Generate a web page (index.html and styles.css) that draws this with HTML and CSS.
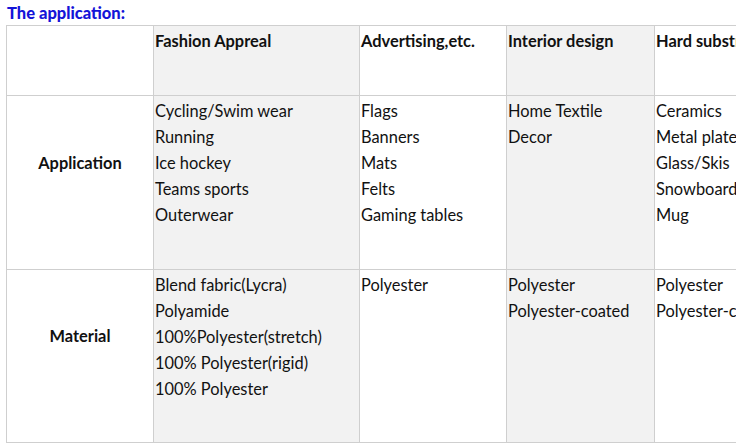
FILE: index.html
```html
<!DOCTYPE html>
<html>
<head>
<meta charset="utf-8">
<link rel="stylesheet" href="styles.css">
</head>
<body>
<div class="page">
  <h2 class="title">The application:</h2>
  <div class="clip">
    <table class="grid">
      <colgroup>
        <col class="c1"><col class="c2"><col class="c3"><col class="c4"><col class="c5">
      </colgroup>
      <tr class="head">
        <td></td>
        <td class="shade"><b>Fashion Appreal</b></td>
        <td><b>Advertising,etc.</b></td>
        <td class="shade"><b>Interior design</b></td>
        <td><b>Hard substrates</b></td>
      </tr>
      <tr class="row r1">
        <th>Application</th>
        <td class="shade"><div>Cycling/Swim wear</div><div>Running</div><div>Ice hockey</div><div>Teams sports</div><div>Outerwear</div></td>
        <td><div>Flags</div><div>Banners</div><div>Mats</div><div>Felts</div><div>Gaming tables</div></td>
        <td class="shade"><div>Home Textile</div><div>Decor</div></td>
        <td><div>Ceramics</div><div>Metal plates</div><div>Glass/Skis</div><div>Snowboards</div><div>Mug</div></td>
      </tr>
      <tr class="row r2">
        <th>Material</th>
        <td class="shade"><div>Blend fabric(Lycra)</div><div>Polyamide</div><div>100%Polyester(stretch)</div><div>100% Polyester(rigid)</div><div>100% Polyester</div></td>
        <td><div>Polyester</div></td>
        <td class="shade"><div>Polyester</div><div>Polyester-coated</div></td>
        <td><div>Polyester</div><div>Polyester-coated</div></td>
      </tr>
    </table>
  </div>
</div>
</body>
</html>
```
FILE: styles.css
```css
html, body {
  margin: 0;
  padding: 0;
  background: #fff;
}
.page {
  padding: 3px 0 0 6px;
  font-family: Lato, "Liberation Sans", sans-serif;
  color: #111;
}
.title {
  margin: 0 0 0 1px;
  height: 22px;
  font-size: 16.5px;
  line-height: 20px;
  font-weight: 900;
  color: #1414d8;
}
.clip {
  width: 730px;
  overflow: hidden;
}
.grid {
  border-collapse: collapse;
  table-layout: fixed;
  width: 880px;
  font-size: 16.4px;
}
.c1 { width: 147px; }
.c2 { width: 206px; }
.c3 { width: 147px; }
.c4 { width: 148px; }
.c5 { width: 232px; }
.grid td, .grid th {
  border: 1px solid #cfcfcf;
  padding: 0 1px;
  vertical-align: top;
  text-align: left;
}
.grid th {
  vertical-align: middle;
  text-align: center;
  font-weight: bold;
  padding-bottom: 40px;
}
.shade { background: #f2f2f2; }
.head td {
  height: 66px;
  padding-top: 3px;
  line-height: 24px;
}
.row td div, .row th {
  line-height: 26px;
}
.row td { padding-top: 2px; }
.r1 td { height: 171px; }
.r2 td { height: 170px; }
```
